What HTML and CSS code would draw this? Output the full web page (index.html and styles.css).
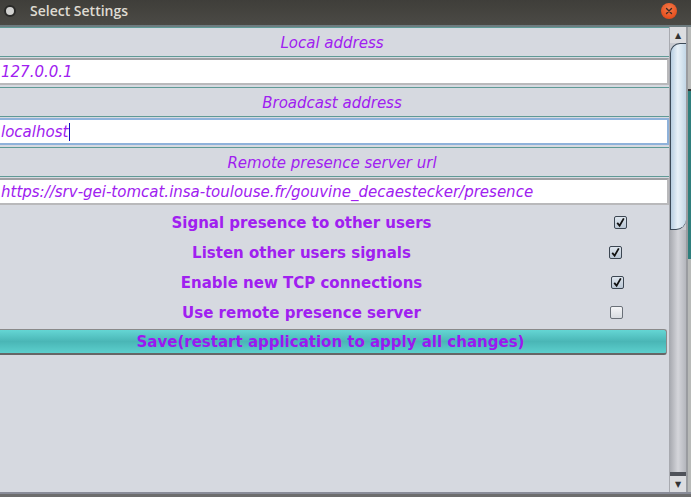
FILE: index.html
```html
<!DOCTYPE html>
<html>
<head>
<meta charset="utf-8">
<link rel="stylesheet" href="styles.css">
</head>
<body>
<div class="window">
  <div class="titlebar">
    <span class="menu-dot"></span>
    <span class="title">Select Settings</span>
    <span class="close">
      <svg width="10" height="10" viewBox="0 0 10 10"><path d="M2.5 2.5 L7.5 7.5 M7.5 2.5 L2.5 7.5" stroke="#3a2a25" stroke-width="1.4" stroke-linecap="round"/></svg>
    </span>
  </div>
  <div class="body">
    <div class="content">
      <div class="label-panel">Local address</div>
      <div class="field">127.0.0.1</div>
      <div class="label-panel">Broadcast address</div>
      <div class="field focused">localhost<span class="caret"></span></div>
      <div class="label-panel">Remote presence server url</div>
      <div class="field">https://srv-gei-tomcat.insa-toulouse.fr/gouvine_decaestecker/presence</div>

      <div class="option">
        <span class="option-label">Signal presence to other users</span>
        <span class="check checked c1"><svg width="11" height="11" viewBox="0 0 11 11"><path d="M2.2 5.8 L4.6 8.6 L8.8 1.4" fill="none" stroke="#111" stroke-width="1.8"/></svg></span>
      </div>
      <div class="option">
        <span class="option-label">Listen other users signals</span>
        <span class="check checked c2"><svg width="11" height="11" viewBox="0 0 11 11"><path d="M2.2 5.8 L4.6 8.6 L8.8 1.4" fill="none" stroke="#111" stroke-width="1.8"/></svg></span>
      </div>
      <div class="option">
        <span class="option-label">Enable new TCP connections</span>
        <span class="check checked c3"><svg width="11" height="11" viewBox="0 0 11 11"><path d="M2.2 5.8 L4.6 8.6 L8.8 1.4" fill="none" stroke="#111" stroke-width="1.8"/></svg></span>
      </div>
      <div class="option">
        <span class="option-label">Use remote presence server</span>
        <span class="check c4"></span>
      </div>
      <div class="save">Save(restart application to apply all changes)</div>
    </div>
    <div class="scrollbar">
      <div class="sb-up">&#9650;</div>
      <div class="sb-track">
        <div class="sb-thumb"></div>
        <div class="sb-rest"></div>
      </div>
      <div class="sb-down">&#9660;</div>
    </div>
    <div class="edge">
      <div class="edge-a"></div>
      <div class="edge-b"></div>
      <div class="edge-c"></div>
    </div>
  </div>
  <div class="bottom"></div>
</div>
</body>
</html>
```

FILE: styles.css
```css
html, body {
  margin: 0;
  padding: 0;
}
body {
  width: 691px;
  height: 497px;
  overflow: hidden;
  background: #d6d9e0;
  font-family: "DejaVu Sans", sans-serif;
}
.window {
  display: flex;
  flex-direction: column;
  height: 497px;
}
.titlebar {
  height: 25px;
  flex: none;
  background: linear-gradient(#3f3e3a, #4b4a45);
  border-bottom: 2px solid #6e7c80;
  display: flex;
  align-items: center;
  position: relative;
}
.menu-dot {
  width: 8px;
  height: 8px;
  border-radius: 50%;
  background: #d2d2d0;
  border: 2px solid #2a2a28;
  margin-left: 4px;
  margin-top: -3px;
}
.title {
  margin-left: 14px;
  margin-top: -4px;
  color: #dfdbd2;
  font-family: "Open Sans", sans-serif;
  font-weight: 600;
  font-size: 14px;
}
.close {
  position: absolute;
  left: 661px;
  top: 3px;
  width: 16px;
  height: 16px;
  border-radius: 50%;
  background: radial-gradient(circle at 50% 35%, #f47a4a, #e5501f 70%, #c8401a);
  display: flex;
  align-items: center;
  justify-content: center;
}
.body {
  flex: 1;
  display: flex;
  min-height: 0;
}
.content {
  width: 669px;
  flex: none;
  overflow: hidden;
  display: flex;
  flex-direction: column;
}
.label-panel {
  height: 27px;
  margin-left: -2px;
  width: 666px;
  border: 1px solid #5f9a96;
  margin-bottom: 1px;
  display: flex;
  align-items: center;
  justify-content: center;
  color: #a020f0;
  font-style: italic;
  font-size: 15px;
  padding-right: 4px;
  padding-top: 1px;
  box-sizing: content-box;
}
.field {
  height: 23px;
  width: 666px;
  margin-left: -2px;
  background: #fff;
  border: 2px solid #b9b9bb;
  border-top-color: #9ea0a4;
  margin-bottom: 2px;
  display: flex;
  align-items: center;
  color: #a020f0;
  font-style: italic;
  font-size: 15px;
  padding-left: 1px;
  box-sizing: content-box;
  white-space: nowrap;
}
.field.focused {
  border-color: #8fb2da;
}
.caret {
  display: inline-block;
  width: 1px;
  height: 18px;
  background: #1010c0;
  margin-left: 1px;
}
.option {
  height: 29px;
  padding-top: 1px;
  display: flex;
  align-items: center;
}
.option-label {
  width: 603px;
  text-align: center;
  color: #a020f0;
  font-weight: bold;
  font-size: 15px;
}
.check {
  width: 11px;
  height: 11px;
  border: 1px solid #3c4652;
  border-radius: 2px;
  background: linear-gradient(#f4f5f7, #d8dbe0);
  display: flex;
  align-items: center;
  justify-content: center;
}
.check.checked {
  background: linear-gradient(#dfe6ee, #b9c6d4);
}
.c1 { margin-left: 11px; }
.c2 { margin-left: 6px; }
.c3 { margin-left: 8px; }
.c4 { margin-left: 7px; border-color: #6a7078; }
.save {
  margin-top: 2px;
  margin-left: -6px;
  width: 671px;
  height: 23px;
  border: 1px solid #8a8a8a;
  border-bottom: 2px solid #666;
  border-radius: 0 3px 3px 0;
  background: linear-gradient(#64d6d4, #4ab6b6 50%, #5ccfcd);
  display: flex;
  align-items: center;
  justify-content: center;
  color: #9a18f0;
  font-weight: bold;
  font-size: 15px;
}
.scrollbar {
  width: 16px;
  flex: none;
  background: #c8cad0;
  border-left: 1px solid #a8aab0;
  display: flex;
  flex-direction: column;
}
.sb-up, .sb-down {
  height: 16px;
  flex: none;
  display: flex;
  align-items: center;
  justify-content: center;
  font-size: 8px;
  color: #333;
  background: #dcdde0;
}
.sb-track {
  flex: 1;
  display: flex;
  flex-direction: column;
}
.sb-thumb {
  height: 185px;
  border-radius: 10px 0 10px 0;
  border: 1px solid #3c4a58;
  border-right: none;
  background: linear-gradient(90deg, #b7cde0, #e8f1f8 45%, #c2d6e6);
}
.sb-rest {
  flex: 1;
  background: linear-gradient(90deg, #a9abb1, #d4d5da 50%, #b4b6bc);
  border-bottom: 4px solid #50535a;
}
.edge {
  flex: 1;
  display: flex;
  flex-direction: column;
  border-left: 2px solid #9a9ca0;
}
.edge-a { height: 62px; background: #b8bab8; border-bottom: 2px solid #333; }
.edge-b { height: 168px; background: #2f7e7c; }
.edge-c { flex: 1; background: #b8bab8; }
.bottom {
  height: 3px;
  flex: none;
  border-top: 2px solid #898c98;
  background: #6d6d6d;
}
```
